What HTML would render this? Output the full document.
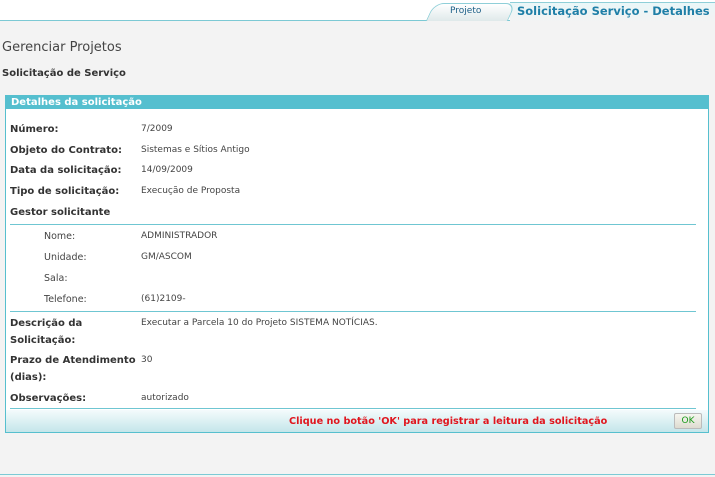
<!DOCTYPE html>
<html><head><meta charset="utf-8"><style>
body{margin:0;width:715px;height:477px;background:#f3f3f3;font-family:"DejaVu Sans",Verdana,sans-serif;position:relative;overflow:hidden;color:#333}
.top{position:absolute;left:0;top:0;width:715px;height:20px;background:#fff;border-bottom:1px solid #7cc9d4}
.tab1{position:absolute;left:430px;top:3px;width:80px;height:17px;background:linear-gradient(#fff,#dfe9ea);border:1px solid #8fcfd8;border-bottom:none;border-radius:10px 10px 0 0;transform:skewX(-25deg)}
.tab2{position:absolute;left:510px;top:2px;width:215px;height:19px;background:linear-gradient(#eaf7f8,#f3f3f3);border-top:1px solid #8fcfd8}
.t1{position:absolute;left:450px;top:6px;font-size:9px;color:#1b5e86}
.t2{position:absolute;left:517px;top:4px;font-size:11.5px;font-weight:bold;color:#1f7fa7}
.h1{position:absolute;left:2px;top:40px;font-size:13px;color:#444}
.h2{position:absolute;left:2px;top:68px;font-size:10px;font-weight:bold;color:#333}
.panel{position:absolute;left:5px;top:95px;width:702px;height:336px;background:#fff;border:1px solid #56bfce}
.ph{height:13px;background:#55bfcf;color:#fff;font-size:10px;font-weight:bold;padding-left:5px;line-height:14px}
.l{position:absolute;font-size:10px;font-weight:bold;color:#333;line-height:17px}
.s{position:absolute;font-size:9.5px;color:#444}
.v{position:absolute;font-size:9px;color:#444}
.hr{position:absolute;height:1px;background:#6fc6d2}
.foot{position:absolute;left:0;top:314px;width:702px;height:22px;background:linear-gradient(#f4fbfc,#c4e6ea)}
.msg{position:absolute;left:283px;top:6px;font-size:9.7px;font-weight:bold;color:#e0161e}
.ok{position:absolute;left:668px;top:3px;width:26px;height:14px;border:1px solid #bbb;border-radius:2px;background:linear-gradient(#f6f6f0,#dedbd0);color:#1a9a1a;font-size:9px;text-align:center;line-height:14px}
.bot{position:absolute;left:0;top:474px;width:715px;height:1px;background:#7ccad5}
</style></head><body>
<div class="top"></div>
<div class="tab2"></div>
<div class="tab1"></div>
<div class="t1">Projeto</div>
<div class="t2">Solicitação Serviço - Detalhes</div>
<div class="h1">Gerenciar Projetos</div>
<div class="h2">Solicitação de Serviço</div>
<div class="panel">
<div class="ph">Detalhes da solicitação</div>
<div class="l" style="left:4px;top:25px">Número:</div><div class="v" style="left:135px;top:28px">7/2009</div>
<div class="l" style="left:4px;top:46px">Objeto do Contrato:</div><div class="v" style="left:135px;top:49px">Sistemas e Sítios Antigo</div>
<div class="l" style="left:4px;top:66px">Data da solicitação:</div><div class="v" style="left:135px;top:69px">14/09/2009</div>
<div class="l" style="left:4px;top:87px">Tipo de solicitação:</div><div class="v" style="left:135px;top:90px">Execução de Proposta</div>
<div class="l" style="left:4px;top:108px">Gestor solicitante</div>
<div class="hr" style="left:4px;top:128px;width:686px"></div>
<div class="s" style="left:38px;top:135px">Nome:</div><div class="v" style="left:135px;top:135px">ADMINISTRADOR</div>
<div class="s" style="left:38px;top:156px">Unidade:</div><div class="v" style="left:135px;top:156px">GM/ASCOM</div>
<div class="s" style="left:38px;top:177px">Sala:</div>
<div class="s" style="left:38px;top:198px">Telefone:</div><div class="v" style="left:135px;top:198px">(61)2109-</div>
<div class="hr" style="left:4px;top:215px;width:686px"></div>
<div class="l" style="left:4px;top:219px">Descrição da<br>Solicitação:</div><div class="v" style="left:135px;top:222px">Executar a Parcela 10 do Projeto SISTEMA NOTÍCIAS.</div>
<div class="l" style="left:4px;top:256px">Prazo de Atendimento<br>(dias):</div><div class="v" style="left:135px;top:259px">30</div>
<div class="l" style="left:4px;top:294px">Observações:</div><div class="v" style="left:135px;top:297px">autorizado</div>
<div class="hr" style="left:4px;top:312px;width:686px"></div>
<div class="foot"><div class="msg">Clique no botão 'OK' para registrar a leitura da solicitação</div><div class="ok">OK</div></div>
</div>
<div class="bot"></div>
</body></html>
